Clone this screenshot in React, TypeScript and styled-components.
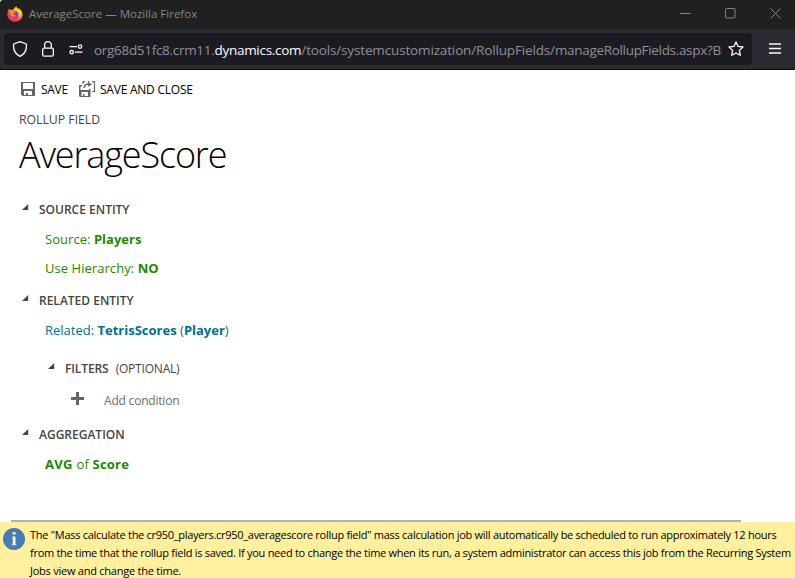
import React from 'react';
import styled, { createGlobalStyle } from 'styled-components';

const Global = createGlobalStyle`
  * { box-sizing: border-box; }
  body { margin: 0; background: #fff; font-family: "Open Sans", "Noto Sans", sans-serif; overflow: hidden; }
  svg { display: block; flex: none; }
`;

const Window = styled.div`
  width: 795px;
  height: 578px;
  display: flex;
  flex-direction: column;
  overflow: hidden;
`;

const TitleBar = styled.header`
  height: 29px;
  flex: none;
  display: flex;
  align-items: center;
  padding: 0 14px 2px 7px;
  background: #202020;
  border-top-left-radius: 3px;
`;

const Label = styled.span<{ $size: number; $spacing?: number; $color?: string; $weight?: number }>`
  font-size: ${(p) => p.$size}px;
  letter-spacing: ${(p) => p.$spacing ?? 0}px;
  color: ${(p) => p.$color ?? 'inherit'};
  font-weight: ${(p) => p.$weight ?? 400};
  white-space: pre;
`;

const TitleText = styled(Label)`
  margin-left: 6px;
  flex: 1;
`;

const WindowButtons = styled.div`
  display: flex;
  gap: 34px;
`;

const NavBar = styled.nav`
  height: 41px;
  flex: none;
  display: flex;
  align-items: center;
  padding: 0 14px 0 4px;
  background: #2b2a33;
  border-bottom: 1px solid #0c0c0d;
`;

const AddressBar = styled.div`
  width: 748px;
  height: 32px;
  display: flex;
  align-items: center;
  padding: 0 7px 0 8px;
  border-radius: 4px;
  background: #1c1b22;
`;

const SiteIcons = styled.div`
  display: flex;
  gap: 12px;
`;

const Url = styled.div`
  width: 628px;
  margin-left: 10px;
  margin-right: 6px;
  overflow: hidden;
  white-space: nowrap;
  line-height: 20px;
  color: #8f8f98;
`;

const MenuButton = styled.div`
  margin-left: auto;
  padding-bottom: 1px;
`;

const Page = styled.main`
  height: 450px;
  flex: none;
  padding-top: 9px;
  color: #444;
`;

const CommandBar = styled.div`
  height: 20px;
  display: flex;
  align-items: center;
  padding-left: 21px;
  color: #000;
`;

const Command = styled.div<{ $width: number; $gap: number }>`
  width: ${(p) => p.$width}px;
  display: flex;
  align-items: center;
  gap: ${(p) => p.$gap}px;
`;

const Row = styled.div<{ $height: number; $indent: number }>`
  height: ${(p) => p.$height}px;
  padding-left: ${(p) => p.$indent}px;
  display: flex;
  align-items: center;
`;

const SectionRow = styled(Row)`
  gap: 10px;

  svg {
    margin-bottom: 5px;
  }
`;

const SectionTitle = styled.div`
  display: flex;
  gap: 7px;
`;

const ConditionRow = styled(Row)`
  gap: 20px;

  svg {
    margin-bottom: 4px;
  }
`;

const Heading = styled.h1`
  height: 30px;
  margin: 0 0 18px;
  padding-left: 19px;
  display: flex;
  align-items: center;
  color: #000;
`;

const Divider = styled.div`
  width: 730px;
  height: 2px;
  flex: none;
  margin-left: 11px;
  background: #b1b1b1;
`;

const Notice = styled.footer`
  height: 56px;
  flex: none;
  display: flex;
  padding: 4px 0 0 3px;
  gap: 5px;
  background: #fff09f;
  color: #000;
`;

const NoticeText = styled.div`
  display: flex;
  flex-direction: column;
  line-height: 18px;
`;

const InfoSlot = styled.div`
  padding-top: 2px;
`;

const GREEN = '#1f8700';
const BLUE = '#00708f';

const FirefoxIcon = () => (
  <svg width="16" height="16" viewBox="0 0 16 16">
    <defs>
      <linearGradient id="flame" x1="0.9" y1="0" x2="0.2" y2="1">
        <stop offset="0" stopColor="#fff24a" />
        <stop offset="0.35" stopColor="#ffb52b" />
        <stop offset="0.65" stopColor="#ff5038" />
        <stop offset="1" stopColor="#e8217c" />
      </linearGradient>
    </defs>
    <path d="M2.1 2.6l1.3 1.5C4.2 3.7 5.3 3.7 6 3.9 7 2.6 7.6 1.5 9.4.2c.1 1.4.9 2.1 2 3 .2-.5.2-.9.1-1.3 2.7 1.8 4 4 4 6.7 0 4.1-3.3 7.2-7.500 7.200S.4 12.600.4 8.600C.4 6.500 1.100 4.400 2.100 2.600z" fill="url(#flame)" />
    <circle cx="7.700" cy="8.500" r="3.500" fill="#7543e8" />
    <path d="M3.200 5.700c1-.9 2.500-.8 3.300.1l2 .3c-.2 1.100-1.900 1.200-2.400 1.900.1 1.400 1.700 1.900 3.100 1.200-1 2.300-4.700 2-5.500-.7-.2-.9-.5-1.800-.5-2.800z" fill="#ff9a32" />
    <path d="M9.300.4c-.5 2.700 3.300 3.600 3.200 7.200 0 1.100-.3 2.300-.9 3.100 1.700-.8 2.400-2.700 1.900-4.800-.5-1.700-4-2.800-4.200-5.500z" fill="#ffda35" />
  </svg>
);

const ShieldIcon = () => (
  <svg width="16" height="18" viewBox="0 0 16 18" fill="none" stroke="#fbfbfe" strokeWidth="1.300" strokeLinejoin="round">
    <path d="M8 1.700L14.300 4C15 9.500 12.500 14 8 16.300 3.500 14 1 9.500 1.700 4z" />
  </svg>
);

const LockIcon = () => (
  <svg width="16" height="18" viewBox="0 0 16 18" fill="none" stroke="#fbfbfe" strokeWidth="1.300">
    <rect x="2.650" y="8.150" width="10.700" height="8" rx="1.500" />
    <path d="M4.650 8V5a3.350 3.350 0 0 1 6.700 0v3" />
  </svg>
);

const PermissionsIcon = () => (
  <svg width="16" height="18" viewBox="0 0 16 18" fill="none" stroke="#fbfbfe" strokeWidth="1.300">
    <path d="M1.500 6.600H9M7 12.200h7.500" />
    <circle cx="12" cy="6.600" r="1.700" />
    <circle cx="3.700" cy="12.200" r="1.700" />
  </svg>
);

const StarIcon = () => (
  <svg width="16" height="16" viewBox="0 0 16 16" fill="none" stroke="#fbfbfe" strokeWidth="1.300" strokeLinejoin="round">
    <path d="M8 .9l2.100 4.500 4.900.6-3.600 3.400.9 4.900L8 12l-4.300 2.300.9-4.900L1 6l4.900-.6z" />
  </svg>
);

const SaveIcon = () => (
  <svg width="14" height="14" viewBox="0 0 14 14" shapeRendering="crispEdges">
    <path fillRule="evenodd" d="M0 0h14v14H1l-1-1zM2 1v6h10V1zM3 9v4h2v-2h2v2h4V9z" fill="#666" />
  </svg>
);

const SaveCloseIcon = () => (
  <svg width="17" height="16" viewBox="0 0 17 16">
    <path fillRule="evenodd" d="M0 4h3v1.500H1.500V9H10V8h1.500v8H1l-1-1zM2.500 11v4H4v-2h1.500v2H9v-4z" fill="#666" />
    <path d="M4 3V.6h2M9 .6h1M13 .6h2.500v9.900H13" fill="none" stroke="#666" strokeWidth="1.200" />
    <path d="M5.200 7c0-3 1.200-3.900 4.500-3.900" fill="none" stroke="#666" strokeWidth="1.500" />
    <path d="M9 .8l4 2.500-4 2.700z" fill="#666" />
  </svg>
);

const Caret = () => (
  <svg width="7" height="6" viewBox="0 0 7 6">
    <path d="M6.200 0v6H0z" fill="#444" />
  </svg>
);

interface SectionProps {
  title: string;
  height: number;
  indent?: number;
  spacing?: number;
  children?: React.ReactNode;
}

const Section = ({ title, height, indent = 22, spacing = 0, children }: SectionProps) => (
  <SectionRow $height={height} $indent={indent}>
    <Caret />
    <SectionTitle>
      <Label $size={12} $weight={600} $spacing={spacing}>{title}</Label>
      {children}
    </SectionTitle>
  </SectionRow>
);

export default function App() {
  return (
    <Window>
      <Global />
      <TitleBar>
        <FirefoxIcon />
        <TitleText $size={11.5} $color="#858585">AverageScore — Mozilla Firefox</TitleText>
        <WindowButtons>
          <svg width="11" height="11" viewBox="0 0 11 11"><path d="M0 5.500h10.500" stroke="#858585" /></svg>
          <svg width="11" height="11" viewBox="0 0 11 11"><rect x=".5" y=".5" width="9.500" height="9.500" rx="1" fill="none" stroke="#858585" /></svg>
          <svg width="11" height="11" viewBox="0 0 11 11"><path d="M.5.5l10 10M10.500.5l-10 10" stroke="#858585" /></svg>
        </WindowButtons>
      </TitleBar>
      <NavBar>
        <AddressBar>
          <SiteIcons>
            <ShieldIcon />
            <LockIcon />
            <PermissionsIcon />
          </SiteIcons>
          <Url>
            <Label $size={13.5} $spacing={-0.3}>org68d51fc8.crm11.</Label>
            <Label $size={13.5} $spacing={-0.28} $color="#fbfbfe">dynamics.com</Label>
            <Label $size={13.5} $spacing={-0.15}>/tools/systemcustomization/RollupFields/</Label>
            <Label $size={13.5} $spacing={-0.32}>manageRollupFields.aspx?BI</Label>
          </Url>
          <StarIcon />
        </AddressBar>
        <MenuButton>
          <svg width="12" height="11" viewBox="0 0 12 11"><path d="M0 1h12M0 5.500h12M0 10h12" stroke="#fbfbfe" strokeWidth="1.400" /></svg>
        </MenuButton>
      </NavBar>
      <Page>
        <CommandBar>
          <Command $width={58} $gap={6}>
            <SaveIcon />
            <Label $size={12} $spacing={-0.3}>SAVE</Label>
          </Command>
          <Command $width={130} $gap={4}>
            <SaveCloseIcon />
            <Label $size={12} $spacing={-0.23}>SAVE AND CLOSE</Label>
          </Command>
        </CommandBar>
        <Row $height={40} $indent={19}>
          <Label $size={12.3} $spacing={-0.03}>ROLLUP FIELD</Label>
        </Row>
        <Heading>
          <Label $size={36} $weight={300} $spacing={-1.15}>AverageScore</Label>
        </Heading>
        <Section title="SOURCE ENTITY" height={45} />
        <Row $height={14} $indent={45}>
          <Label $size={13} $color={GREEN} $spacing={0.05}>Source: </Label>
          <Label $size={13} $color={GREEN} $weight={700}>Players</Label>
        </Row>
        <Row $height={44} $indent={45}>
          <Label $size={13} $color={GREEN} $spacing={0.05}>Use Hierarchy: </Label>
          <Label $size={13} $color={GREEN} $weight={700}>NO</Label>
        </Row>
        <Section title="RELATED ENTITY" height={20} />
        <Row $height={40} $indent={45}>
          <Label $size={13} $color={BLUE}>Related: </Label>
          <Label $size={13} $color={BLUE} $weight={700}>TetrisScores </Label>
          <Label $size={13} $color={BLUE}>(</Label>
          <Label $size={13} $color={BLUE} $weight={700}>Player</Label>
          <Label $size={13} $color={BLUE}>)</Label>
        </Row>
        <Section title="FILTERS" height={36} indent={48} spacing={-0.1}>
          <Label $size={12} $spacing={-0.2}>(OPTIONAL)</Label>
        </Section>
        <ConditionRow $height={29} $indent={71}>
          <svg width="13" height="13" viewBox="0 0 13 13"><path d="M6.500 0v13M0 6.500h13" stroke="#666" strokeWidth="3" /></svg>
          <Label $size={12} $color="#6c6c6c" $spacing={-0.2}>Add condition</Label>
        </ConditionRow>
        <Section title="AGGREGATION" height={38} />
        <Row $height={22} $indent={45}>
          <Label $size={13} $color={GREEN} $weight={700} $spacing={0.3}>AVG </Label>
          <Label $size={13} $color={GREEN} $spacing={0.2}>of </Label>
          <Label $size={13} $color={GREEN} $weight={700} $spacing={0.2}>Score</Label>
        </Row>
      </Page>
      <Divider />
      <Notice>
        <InfoSlot>
          <svg width="22" height="22" viewBox="0 0 22 22">
            <circle cx="11" cy="11" r="11" fill="#477bb5" />
            <path d="M9.600 4h3v2.500h-3zM9 8.500h3.500v8h1v.8H8.700v-.8h1V9.300H9z" fill="#f4f1d4" />
          </svg>
        </InfoSlot>
        <NoticeText>
          <Label $size={11} $spacing={-0.28}>The "Mass calculate the cr950_players.cr950_averagescore rollup field" mass calculation job will automatically be scheduled to run approximately 12 hours</Label>
          <Label $size={11} $spacing={-0.28}>from the time that the rollup field is saved. If you need to change the time when its run, a system administrator can access this job from the Recurring System</Label>
          <Label $size={11} $spacing={-0.24}>Jobs view and change the time.</Label>
        </NoticeText>
      </Notice>
    </Window>
  );
}
